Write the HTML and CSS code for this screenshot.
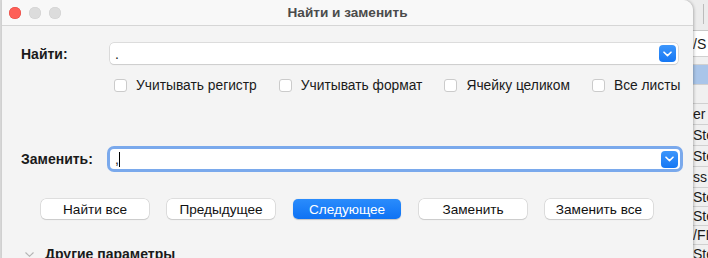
FILE: index.html
```html
<!DOCTYPE html>
<html lang="ru">
<head>
    <meta charset="UTF-8">
    <title>Найти и заменить</title>
    <link rel="stylesheet" href="styles.css">
</head>
<body>
    <div class="desk">
        <div class="edge"></div>
        <div class="dialog">
            <div class="titlebar">
                <div class="lights">
                    <span class="light red"></span>
                    <span class="light"></span>
                    <span class="light"></span>
                </div>
                <div class="title">Найти и заменить</div>
            </div>
            <div class="content">
                <div class="row find_row">
                    <div class="label">Найти:</div>
                    <div class="combo">
                        <span class="combo_text">.</span>
                        <span class="drop">
                            <svg width="9" height="6" viewBox="0 0 9 6"><path d="M1 1.2 L4.5 4.6 L8 1.2" fill="none" stroke="#fff" stroke-width="1.6" stroke-linecap="round" stroke-linejoin="round"/></svg>
                        </span>
                    </div>
                </div>
                <div class="checks">
                    <label class="check"><span class="box"></span>Учитывать регистр</label>
                    <label class="check"><span class="box"></span>Учитывать формат</label>
                    <label class="check"><span class="box"></span>Ячейку целиком</label>
                    <label class="check"><span class="box"></span>Все листы</label>
                </div>
                <div class="row replace_row">
                    <div class="label">Заменить:</div>
                    <div class="combo focused">
                        <span class="combo_text">,<span class="caret"></span></span>
                        <span class="drop">
                            <svg width="9" height="6" viewBox="0 0 9 6"><path d="M1 1.2 L4.5 4.6 L8 1.2" fill="none" stroke="#fff" stroke-width="1.6" stroke-linecap="round" stroke-linejoin="round"/></svg>
                        </span>
                    </div>
                </div>
                <div class="buttons">
                    <button class="btn">Найти все</button>
                    <button class="btn">Предыдущее</button>
                    <button class="btn primary">Следующее</button>
                    <button class="btn">Заменить</button>
                    <button class="btn">Заменить все</button>
                </div>
                <div class="more">
                    <svg width="9" height="5" viewBox="0 0 9 5"><path d="M0.5 0.5 L4.5 4.3 L8.5 0.5" fill="none" stroke="#b4b4b4" stroke-width="1.1"/></svg>
                    <span>Другие параметры</span>
                </div>
            </div>
        </div>
        <div class="sheet">
            <div class="toolbar"><span class="sep"></span></div>
            <div class="cell tall">/S</div>
            <div class="cell gap"></div>
            <div class="cell selected"></div>
            <div class="cell gap2"></div>
            <div class="cell wide">er</div>
            <div class="cell wide">Ste</div>
            <div class="cell wide">Ste</div>
            <div class="cell wide">ss</div>
            <div class="cell">Ste</div>
            <div class="cell">Ste</div>
            <div class="cell">/FI</div>
            <div class="cell">Ste</div>
        </div>
    </div>
</body>
</html>
```

FILE: styles.css
```css
html, body {
    margin: 0;
    height: 100%;
    overflow: hidden;
}
body {
    font-family: "Liberation Sans", Arial, sans-serif;
    font-size: 14px;
    color: #1a1a1a;
    background: #ececec;
}
.desk {
    display: flex;
    height: 258px;
}
.edge {
    width: 2px;
    background: #d8d8d8;
}
.dialog {
    width: 691px;
    flex-shrink: 0;
    background: #f4f4f4;
    border-top-right-radius: 10px;
    box-shadow: 1px 0 3px rgba(0, 0, 0, 0.25);
    position: relative;
    z-index: 1;
}
.titlebar {
    height: 26px;
    display: flex;
    align-items: center;
    background: #f8f8f8;
    border-bottom: 1px solid #d6d6d6;
    border-top-right-radius: 10px;
    box-sizing: border-box;
}
.lights {
    display: flex;
    gap: 8px;
    padding-left: 7px;
    width: 52px;
}
.light {
    width: 12px;
    height: 12px;
    border-radius: 50%;
    background: #dcdcdc;
    box-shadow: inset 0 0 0 0.5px #cfcfcf;
}
.light.red {
    background: #fe5f57;
    box-shadow: inset 0 0 0 0.5px #e2463f;
}
.title {
    flex: 1;
    text-align: center;
    font-weight: bold;
    color: #4b4b4b;
    font-size: 13.6px;
    padding-right: 59px;
}
.content {
    padding: 17px 0 0 19px;
}
.row {
    display: flex;
    align-items: center;
}
.label {
    width: 89px;
    font-weight: bold;
    font-size: 14px;
}
.combo {
    width: 568px;
    height: 21px;
    box-sizing: border-box;
    background: #fff;
    border-radius: 4px;
    box-shadow: 0 0 0 0.5px #c4c4c4, 0 1px 1px rgba(0, 0, 0, 0.12);
    display: flex;
    align-items: center;
    padding: 0 2px 0 5px;
}
.combo_text {
    flex: 1;
    font-size: 14px;
    display: flex;
    align-items: center;
}
.caret {
    display: inline-block;
    width: 1px;
    height: 15px;
    background: #000;
}
.drop {
    width: 17px;
    height: 17px;
    border-radius: 4px;
    background: linear-gradient(#3d96fb, #1577f4);
    display: flex;
    align-items: center;
    justify-content: center;
}
.focused {
    width: 570px;
    height: 20px;
    box-shadow: 0 0 0 3px #7aa9ec;
}
.checks {
    display: flex;
    margin: 14px 0 0 93px;
    height: 14px;
}
.check {
    display: flex;
    align-items: center;
    flex-shrink: 0;
    white-space: nowrap;
    font-size: 13.8px;
    margin-right: 22px;
}
.box {
    width: 13px;
    height: 13px;
    flex-shrink: 0;
    box-sizing: border-box;
    background: #fff;
    border: 1px solid #cbcbcb;
    border-radius: 3px;
    margin-right: 9px;
}
.replace_row {
    margin-top: 57px;
}
.buttons {
    display: flex;
    gap: 18px;
    margin: 30px 0 0 20px;
}
.btn {
    width: 108px;
    height: 20px;
    border: none;
    border-radius: 5px;
    background: #fff;
    box-shadow: 0 0 0 0.5px #c8c8c8, 0 1px 1px rgba(0, 0, 0, 0.15);
    font-family: "Liberation Sans", Arial, sans-serif;
    font-size: 13.6px;
    color: #111;
    padding: 0;
}
.btn.primary {
    background: linear-gradient(#2a8cfc, #0e72f4);
    color: #fff;
    box-shadow: 0 0.5px 1px rgba(0, 0, 0, 0.2);
}
.more {
    display: flex;
    align-items: center;
    gap: 11px;
    margin: 27px 0 0 4px;
    font-weight: bold;
    font-size: 14px;
}
.sheet {
    flex: 1;
    background: #fff;
    font-size: 14px;
    overflow: hidden;
    white-space: nowrap;
}
.toolbar {
    height: 31px;
    background: #ececec;
    border-bottom: 1px solid #c8c8c8;
    display: flex;
    justify-content: flex-end;
    padding-right: 4px;
    box-sizing: border-box;
}
.sep {
    width: 1px;
    height: 20px;
    margin-top: 4px;
    background: #bcbcbc;
}
.cell {
    height: 19px;
    line-height: 19px;
    border-bottom: 1px solid #d0d0d0;
    box-sizing: border-box;
    background: #f0f0f0;
}
.cell.wide {
    height: 21px;
    line-height: 21px;
}
.cell.tall {
    height: 26px;
    line-height: 26px;
    background: #fff;
}
.cell.gap {
    height: 8px;
}
.cell.selected {
    background: #a9c5e9;
    height: 20px;
}
.cell.gap2 {
    height: 19px;
}
```
